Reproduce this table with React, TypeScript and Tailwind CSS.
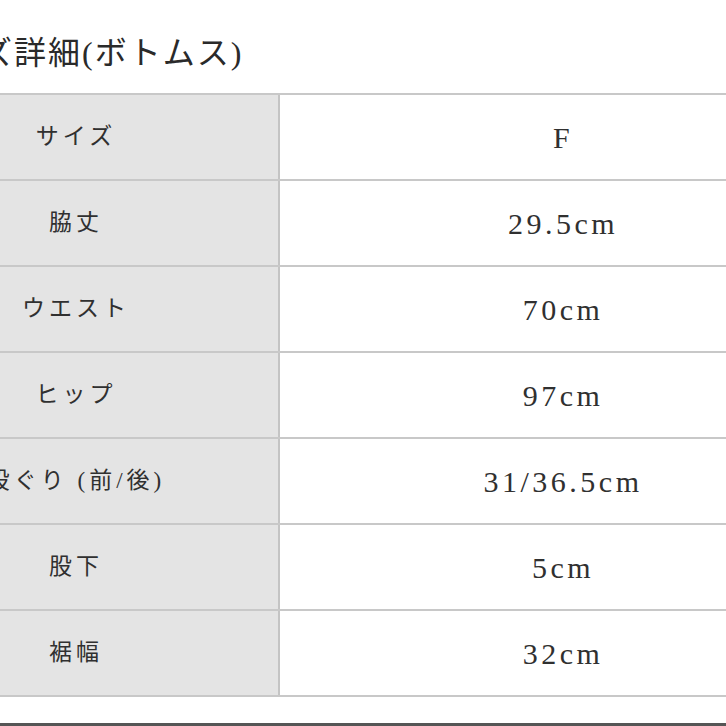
import React from "react";

const rows: [string, string][] = [
  ["サイズ", "F"],
  ["脇丈", "29.5cm"],
  ["ウエスト", "70cm"],
  ["ヒップ", "97cm"],
  ["股ぐり (前/後)", "31/36.5cm"],
  ["股下", "5cm"],
  ["裾幅", "32cm"],
];

const font = { fontFamily: '"Liberation Serif", "Noto Sans CJK JP", serif' };

export default function App() {
  return (
    <div
      className="w-[726px] h-[726px] overflow-hidden bg-white flex flex-col text-[#2a2a2a]"
      style={font}
    >
      <div className="h-[93px] shrink-0 flex items-center ml-[-87px] pt-[12px]">
        <span className="text-[32px] leading-none tracking-[2px] whitespace-nowrap">
          サイズ詳細(ボトムス)
        </span>
      </div>
      <div className="ml-[-126px] w-[972px] shrink-0 border-t-2 border-[#c8c8c8]">
        {rows.map(([label, value]) => (
          <div key={label} className="flex h-[86px] border-b-2 border-[#c8c8c8]">
            <div className="w-[406px] shrink-0 bg-[#e4e4e4] border-r-2 border-[#c4c4c4] flex items-center justify-center">
              <span className="text-[23px] tracking-[4px] whitespace-nowrap text-[#303030]">{label}</span>
            </div>
            <div className="flex-1 flex items-center justify-center">
              <span className="text-[30px] tracking-[3.5px] whitespace-nowrap text-[#303030]">{value}</span>
            </div>
          </div>
        ))}
      </div>
      <div className="flex-1" />
      <div className="h-[3px] shrink-0 bg-[#555]" />
    </div>
  );
}
